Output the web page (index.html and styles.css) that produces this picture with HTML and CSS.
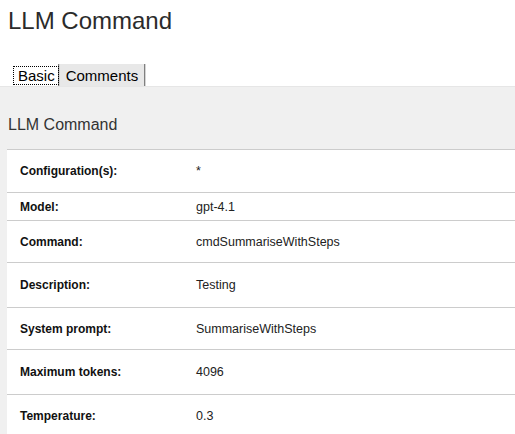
FILE: index.html
```html
<!DOCTYPE html>
<html>
<head>
<meta charset="utf-8">
<title>LLM Command</title>
<link rel="stylesheet" href="styles.css">
</head>
<body>
<header class="page-head">
  <h1 class="page-title">LLM Command</h1>
</header>
<nav class="tabs">
  <div class="tab tab-active"><span class="tab-label">Basic</span></div>
  <div class="tab"><span class="tab-label">Comments</span></div>
</nav>
<section class="panel">
  <h2 class="panel-title">LLM Command</h2>
  <div class="details">
    <div class="row row-first"><div class="label">Configuration(s):</div><div class="value">*</div></div>
    <div class="row row-sm"><div class="label">Model:</div><div class="value">gpt-4.1</div></div>
    <div class="row row-md"><div class="label">Command:</div><div class="value">cmdSummariseWithSteps</div></div>
    <div class="row row-lg"><div class="label">Description:</div><div class="value">Testing</div></div>
    <div class="row row-md"><div class="label">System prompt:</div><div class="value">SummariseWithSteps</div></div>
    <div class="row row-lg"><div class="label">Maximum tokens:</div><div class="value">4096</div></div>
    <div class="row row-md"><div class="label">Temperature:</div><div class="value">0.3</div></div>
  </div>
</section>
</body>
</html>
```

FILE: styles.css
```css
html, body {
  margin: 0;
  padding: 0;
  background: #ffffff;
  font-family: "Liberation Sans", Arial, sans-serif;
  color: #333333;
}

.page-head {
  padding: 7px 0 0 8px;
}

.page-title {
  margin: 0;
  font-size: 24px;
  line-height: 28px;
  font-weight: normal;
  color: #2b2b2b;
}

.tabs {
  display: flex;
  margin: 29px 0 0 12px;
  height: 22px;
}

.tab {
  box-sizing: border-box;
  height: 22px;
  padding: 3px 2px 2px 2px;
  border-right: 1px solid #808080;
  box-shadow: 1px 0 0 #d4d4d4;
  margin-right: 1px;
  font-size: 15px;
  line-height: 17px;
  color: #000000;
}

.tab-active {
  background: #ffffff;
  padding-right: 0;
}

.tab-active .tab-label {
  display: block;
  outline: 1px dotted #000000;
  padding: 0 3px 0 4px;
}

.tab:not(.tab-active) {
  background: #e8e8e8;
  padding-left: 6px;
  padding-right: 6px;
}

.panel {
  background: #f0f0f0;
  border-top: 1px solid #e6e6e6;
  padding: 29px 0 0 7px;
}

.panel-title {
  margin: 0 0 15px 1px;
  font-size: 16px;
  line-height: 18px;
  font-weight: normal;
  color: #333333;
}

.details {
  background: #ffffff;
}

.row {
  display: grid;
  grid-template-columns: 189px 1fr;
  align-items: center;
  border-top: 1px solid #cccccc;
  font-size: 12px;
  line-height: 14px;
}

.row-first { height: 42px; }
.row-sm { height: 27px; }
.row-md { height: 41px; }
.row-lg { height: 44px; }

.label {
  padding-left: 13px;
  font-weight: bold;
  color: #111111;
}

.value {
  font-size: 12.5px;
  color: #222222;
}
```
